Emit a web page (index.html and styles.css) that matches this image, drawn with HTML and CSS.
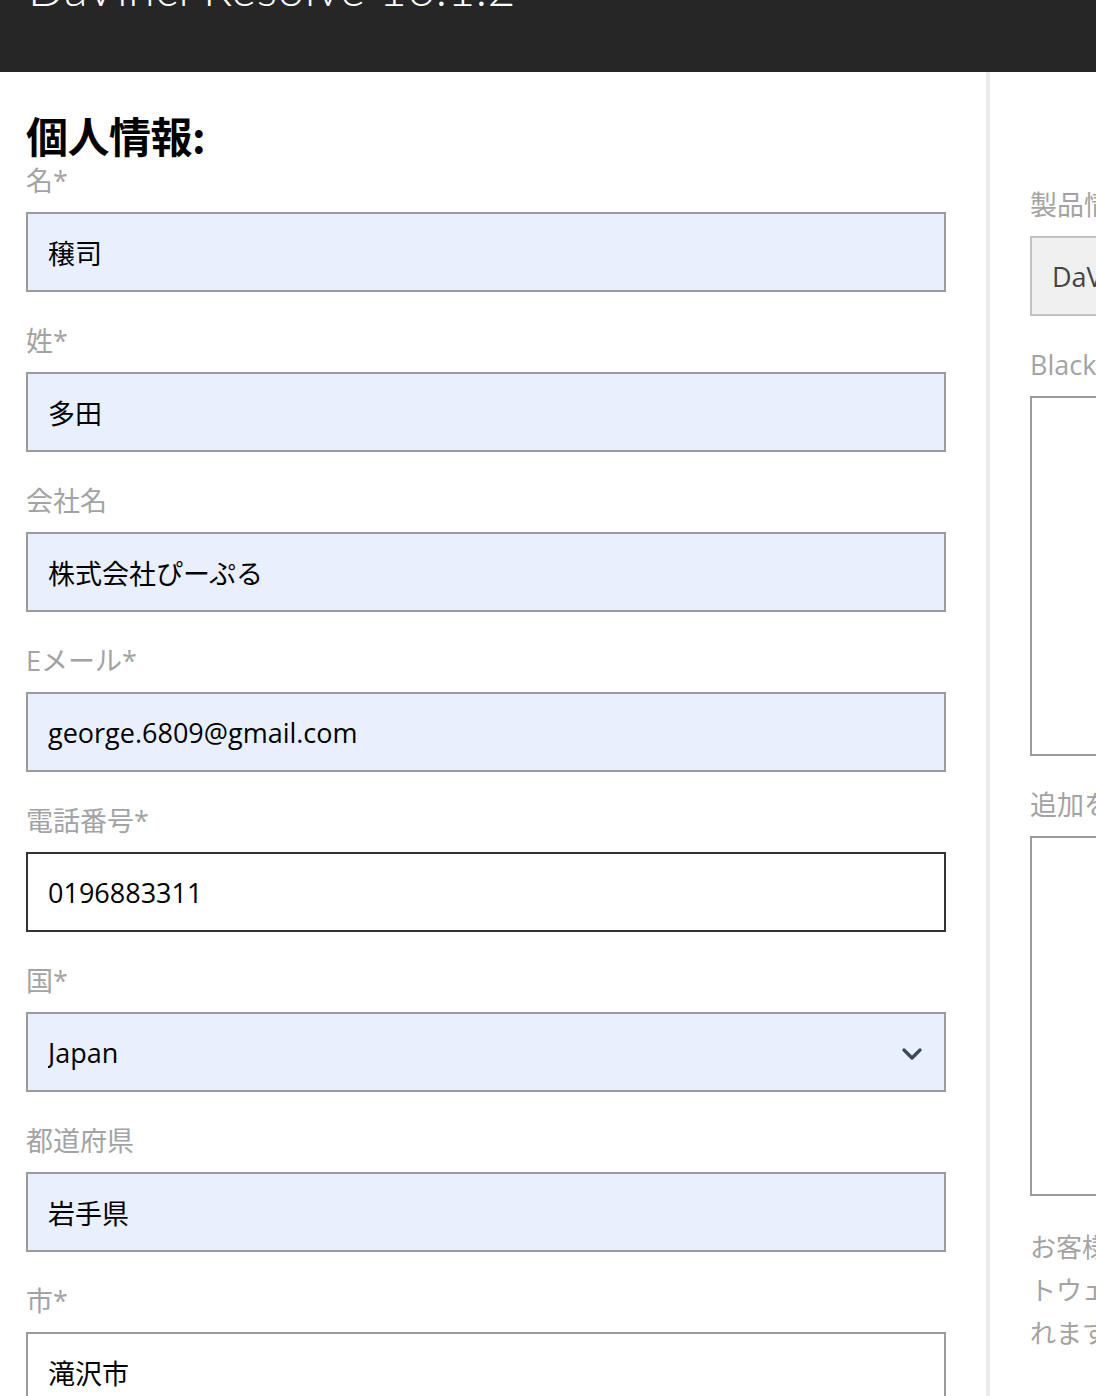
FILE: index.html
```html
<!DOCTYPE html>
<html lang="ja">
<head>
<meta charset="utf-8">
<title>DaVinci Resolve 16.1.2</title>
<link rel="stylesheet" href="styles.css">
</head>
<body>
<header class="topbar">
  <h1 class="product-title">DaVinci Resolve 16.1.2</h1>
</header>
<main class="layout">
  <section class="col-left">
    <h2 class="section-title">個人情報:</h2>
    <div class="field">
      <label class="field-label">名*</label>
      <input class="text-input autofill" type="text" value="穣司">
    </div>
    <div class="field">
      <label class="field-label">姓*</label>
      <input class="text-input autofill" type="text" value="多田">
    </div>
    <div class="field">
      <label class="field-label">会社名</label>
      <input class="text-input autofill" type="text" value="株式会社ぴーぷる">
    </div>
    <div class="field">
      <label class="field-label">Eメール*</label>
      <input class="text-input autofill" type="text" value="george.6809@gmail.com">
    </div>
    <div class="field">
      <label class="field-label">電話番号*</label>
      <input class="text-input focused" type="text" value="0196883311">
    </div>
    <div class="field">
      <label class="field-label">国*</label>
      <div class="select-wrap">
        <select class="text-input autofill select-input"><option>Japan</option></select>
        <svg class="chevron" width="20" height="12" viewBox="0 0 20 12"><path d="M2 2 L10 10 L18 2" fill="none" stroke="#3b4852" stroke-width="3.2" stroke-linecap="round" stroke-linejoin="round"/></svg>
      </div>
    </div>
    <div class="field">
      <label class="field-label">都道府県</label>
      <input class="text-input autofill" type="text" value="岩手県">
    </div>
    <div class="field">
      <label class="field-label">市*</label>
      <input class="text-input" type="text" value="滝沢市">
    </div>
  </section>
  <div class="divider"></div>
  <section class="col-right">
    <div class="field">
      <label class="field-label">製品情報</label>
      <input class="text-input readonly" type="text" value="DaVinci Resolve 16.1.2" readonly>
    </div>
    <div class="field">
      <label class="field-label">Blackmagic Designの製品をどこで知りましたか?</label>
      <textarea class="text-area"></textarea>
    </div>
    <div class="field">
      <label class="field-label">追加をご希望の機能</label>
      <textarea class="text-area"></textarea>
    </div>
    <p class="note">お客様の個人情報は、Blackmagic Designのソフ<br>トウェアのアップデート情報の送付に使用さ<br>れます。</p>
  </section>
</main>
</body>
</html>
```

FILE: styles.css
```css
html, body {
  margin: 0;
  padding: 0;
  overflow: hidden;
  background: #ffffff;
}
body {
  font-family: "Open Sans", "Noto Sans CJK JP", sans-serif;
  color: #111;
  width: 1096px;
}
.topbar {
  height: 72px;
  background: #262626;
  overflow: hidden;
}
.product-title {
  margin: -41px 0 0 28px;
  font-family: "Lato", sans-serif;
  font-weight: 300;
  font-size: 48px;
  line-height: 58px;
  color: #ffffff;
  letter-spacing: 0.5px;
  white-space: nowrap;
}
.layout {
  display: flex;
  width: 1700px;
}
.col-left {
  width: 920px;
  flex: none;
  padding: 39px 40px 0 26px;
}
.divider {
  width: 4px;
  flex: none;
  background: #ebebeb;
  min-height: 1400px;
}
.col-right {
  width: 560px;
  flex: none;
  padding: 118px 40px 0 40px;
}
.section-title {
  margin: 0 0 7px 0;
  font-family: "Noto Sans CJK JP", sans-serif;
  font-weight: 700;
  font-size: 42px;
  line-height: 48px;
  color: #000;
  letter-spacing: -0.5px;
}
.field {
  display: flex;
  flex-direction: column;
  gap: 16px;
  margin-bottom: 34px;
}
.field-label {
  font-family: "Open Sans", "Noto Sans CJK JP", sans-serif;
  font-size: 27px;
  line-height: 30px;
  color: #a3a3a3;
  white-space: nowrap;
}
.text-input {
  box-sizing: border-box;
  width: 920px;
  height: 80px;
  margin: 0;
  padding: 0 20px;
  border: 2px solid #9b9b9b;
  border-radius: 0;
  background: #ffffff;
  font-family: "Open Sans", "Noto Sans CJK JP", sans-serif;
  font-size: 27px;
  color: #000;
  outline: none;
}
.text-input.autofill {
  background: #e8f0fe;
}
.text-input.focused {
  border-color: #333333;
}
.text-input.readonly {
  width: 520px;
  background: #f0f0f0;
  border-color: #c2c2c2;
  color: #444;
}
.select-wrap {
  position: relative;
  width: 920px;
}
.select-input {
  -webkit-appearance: none;
  appearance: none;
  display: block;
}
.chevron {
  position: absolute;
  right: 24px;
  top: 36px;
}
.text-area {
  box-sizing: border-box;
  width: 520px;
  height: 360px;
  margin: 0;
  border: 2px solid #9b9b9b;
  border-radius: 0;
  background: #fff;
  resize: none;
}
.note {
  margin: -6px 0 0 0;
  font-family: "Noto Sans CJK JP", sans-serif;
  font-size: 26px;
  line-height: 43px;
  color: #a3a3a3;
  white-space: nowrap;
}
```
